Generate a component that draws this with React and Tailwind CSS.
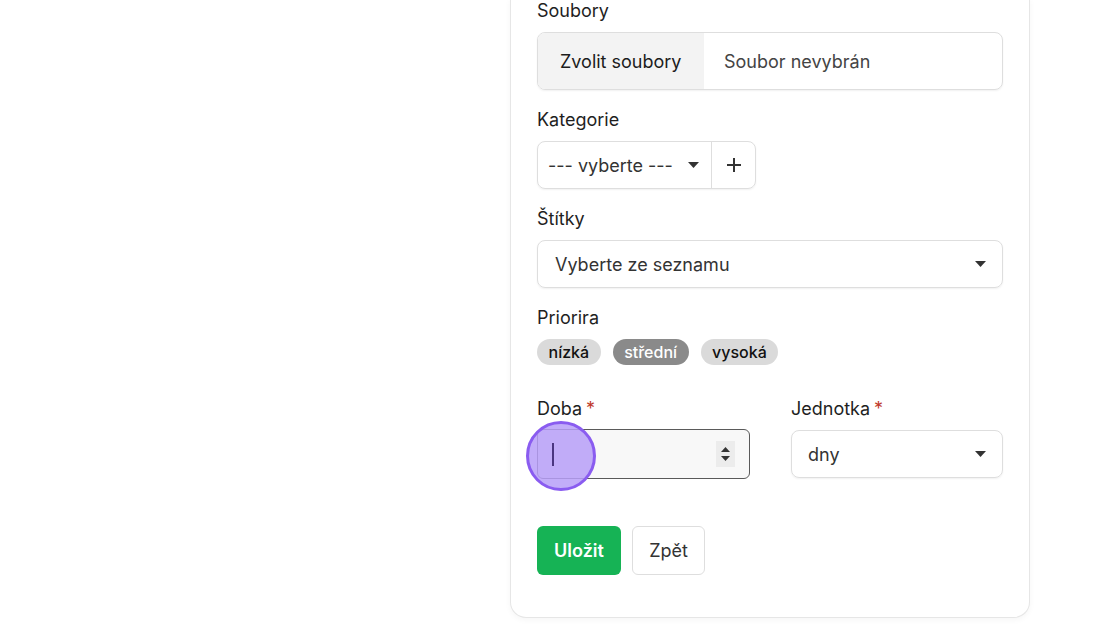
import React from 'react';

const Caret = ({ className = '' }) => (
  <svg width="11" height="6" viewBox="0 0 11 6" className={className}>
    <path d="M0 0h11L5.5 6z" fill="#333" />
  </svg>
);

const Label = ({ children, required }) => (
  <div className="text-[18px] pt-px leading-[23px] text-[#1f1f1f] mb-[10px]">
    {children}
    {required && <span className="text-[#c0392b] ml-1">*</span>}
  </div>
);

const Pill = ({ children, active }) => (
  <span className={`h-[26px] px-[11.5px] rounded-full text-[16px] font-medium flex items-center ${active ? 'bg-[#8a8a8a] text-white' : 'bg-[#dadada] text-[#111]'}`}>
    {children}
  </span>
);

export default function App() {
  return (
    <div className="w-[1120px] h-[626px] bg-white overflow-hidden" style={{ fontFamily: 'Inter, "Noto Sans", sans-serif' }}>
      <div className="ml-[510px] w-[520px] border-x border-b border-[#e6e6e6] rounded-b-2xl bg-white shadow-[0_2px_6px_rgba(0,0,0,0.04)] px-[26px] pb-[42px]">
        <div className="-mt-[2px]">
          <Label>Soubory</Label>
        </div>
        <div className="h-[58px] flex border border-[#dedede] rounded-lg overflow-hidden shadow-[0_1px_2px_rgba(0,0,0,0.06)] text-[18px]">
          <div className="w-[166px] bg-[#f3f3f3] flex items-center pl-[22px] text-[#1c1c1c]">Zvolit soubory</div>
          <div className="flex items-center pl-[20px] text-[#444]">Soubor nevybrán</div>
        </div>

        <div className="mt-[17px]">
          <Label>Kategorie</Label>
        </div>
        <div className="w-[219px] h-[48px] flex border border-[#dedede] rounded-lg shadow-[0_1px_2px_rgba(0,0,0,0.06)] text-[18px] text-[#333]">
          <div className="w-[174px] flex items-center justify-between pl-[10px] pr-[12px] border-r border-[#dedede]">
            <span>--- vyberte ---</span>
            <Caret />
          </div>
          <div className="flex-1 flex items-center justify-center">
            <svg width="16" height="16" viewBox="0 0 16 16">
              <path d="M8 1v14M1 8h14" stroke="#333" strokeWidth="2" />
            </svg>
          </div>
        </div>

        <div className="mt-[17px]">
          <Label>Štítky</Label>
        </div>
        <div className="h-[48px] flex items-center justify-between pl-[17px] pr-[16px] border border-[#dedede] rounded-lg shadow-[0_1px_2px_rgba(0,0,0,0.06)] text-[18px] text-[#333]">
          <span>Vyberte ze seznamu</span>
          <Caret />
        </div>

        <div className="mt-[17px]">
          <Label>Priorira</Label>
        </div>
        <div className="flex gap-[12px]">
          <Pill>nízká</Pill>
          <Pill active>střední</Pill>
          <Pill>vysoká</Pill>
        </div>

        <div className="mt-[31px] flex gap-[41px]">
          <div className="w-[213px]">
            <Label required>Doba</Label>
            <div className="relative -mt-px h-[50px] border border-[#5a5a5a] rounded-md bg-[#f8f8f8] flex items-center justify-end pr-[14px]">
              <div className="w-[19px] h-[26px] bg-[#ececec] flex flex-col items-center justify-center gap-[4px]">
                <svg width="9" height="5" viewBox="0 0 9 5"><path d="M0 5h9L4.5 0z" fill="#333" /></svg>
                <svg width="9" height="5" viewBox="0 0 9 5"><path d="M0 0h9L4.5 5z" fill="#333" /></svg>
              </div>
              <div className="absolute left-[-12px] top-[-9px] w-[70px] h-[70px] rounded-full bg-[#b79ff8]/85 border-[3px] border-[#8a5cf0]" />
              <div className="absolute left-[14px] top-[13px] w-[2px] h-[23px] bg-[#4a3580]" />
            </div>
          </div>
          <div className="flex-1">
            <Label required>Jednotka</Label>
            <div className="h-[48px] flex items-center justify-between pl-[16px] pr-[16px] border border-[#dedede] rounded-lg shadow-[0_1px_2px_rgba(0,0,0,0.06)] text-[18px] text-[#333]">
              <span>dny</span>
              <Caret />
            </div>
          </div>
        </div>

        <div className="mt-[47px] flex gap-[11px]">
          <button className="h-[49px] w-[84px] rounded-md bg-[#16b355] text-white text-[18px] font-semibold">Uložit</button>
          <button className="h-[49px] w-[73px] rounded-md bg-white border border-[#dedede] text-[#333] text-[18px]">Zpět</button>
        </div>
      </div>
    </div>
  );
}
